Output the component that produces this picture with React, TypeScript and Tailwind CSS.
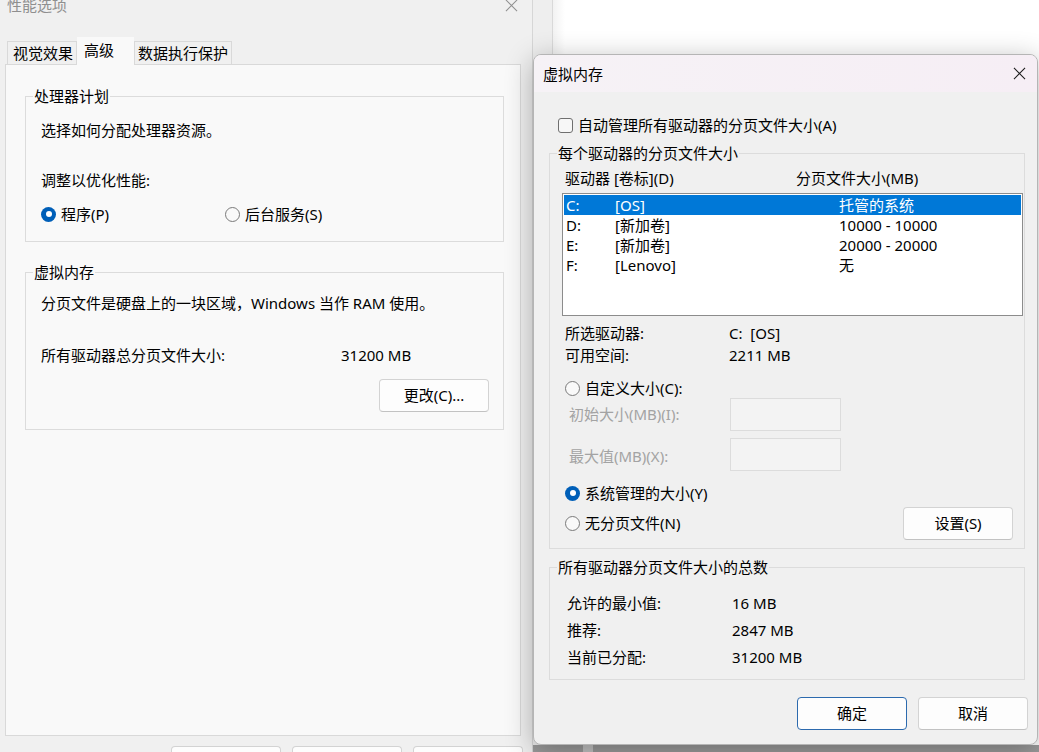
import type { ReactNode } from "react";

/** Thin window-caption close glyph */
function CloseIcon({ className }: { className?: string }) {
  return (
    <svg viewBox="0 0 14 14" className={className} fill="none" stroke="currentColor" strokeWidth="1.1">
      <path d="M1 1L13 13M13 1L1 13" />
    </svg>
  );
}

function Radio({ checked, label, className = "" }: { checked?: boolean; label: string; className?: string }) {
  return (
    <div className={`flex h-[20px] items-center gap-[5px] ${className}`}>
      {checked ? (
        <span className="flex h-[15px] w-[15px] shrink-0 items-center justify-center rounded-full bg-[#005fb8]">
          <span className="h-[6px] w-[6px] rounded-full bg-white" />
        </span>
      ) : (
        <span className="h-[15px] w-[15px] shrink-0 rounded-full border border-[#7a7a7a] bg-[#f9f9f9]" />
      )}
      <span>{label}</span>
    </div>
  );
}

/** Classic Win32 group box */
function Group({ title, className = "", children }: { title: string; className?: string; children: ReactNode }) {
  return (
    <fieldset className={`border border-[#dcdcdc] ${className}`}>
      <legend className="ml-[7px] px-[1px] leading-[20px]">{title}</legend>
      {children}
    </fieldset>
  );
}

function Button({ label, primary, className = "" }: { label?: string; primary?: boolean; className?: string }) {
  return (
    <div
      className={`flex h-[33px] w-[110px] items-center justify-center rounded-[4px] border bg-[#fdfdfd] ${
        primary ? "border-[#2c6aae]" : "border-[#d3d3d3] border-b-[#c2c2c2]"
      } ${className}`}
    >
      {label}
    </div>
  );
}

const drives = [
  { letter: "C:", label: "[OS]", size: "托管的系统", selected: true },
  { letter: "D:", label: "[新加卷]", size: "10000 - 10000" },
  { letter: "E:", label: "[新加卷]", size: "20000 - 20000" },
  { letter: "F:", label: "[Lenovo]", size: "无" },
];

function PerformanceOptions() {
  return (
    <div className="absolute left-0 top-[-14px] flex h-[790px] w-[533px] flex-col border-r border-[#d6d6d6] bg-[#f0f0f0]">
      {/* Title bar (inactive) */}
      <div className="flex h-[38px] shrink-0 items-center justify-between pl-[7px] pr-[14px] text-[#8f8f8f]">
        <span className="leading-[20px]">性能选项</span>
        <CloseIcon className="h-[13px] w-[13px]" />
      </div>

      {/* Tabs */}
      <div className="mt-[13px] flex h-[27px] shrink-0 items-end pl-[7px]">
        <div className="flex h-[23px] w-[70px] items-center border border-b-0 border-[#d9d9d9] pl-[5px]">视觉效果</div>
        <div className="relative z-10 mb-[-1px] flex h-[28px] w-[57px] items-center bg-[#f9f9f9] pb-[2px] pl-[7px]">
          高级
        </div>
        <div className="flex h-[23px] w-[98px] items-center border border-b-0 border-[#d9d9d9] pl-[3px]">
          数据执行保护
        </div>
      </div>

      {/* Tab panel */}
      <div className="ml-[5px] h-[672px] w-[516px] shrink-0 border border-[#d9d9d9] bg-[#f9f9f9] pl-[19px] pt-[21px]">
        <Group title="处理器计划" className="w-[479px]">
          <div className="pb-[17px] pl-[15px]">
            <div className="mt-[14px] leading-[20px]">选择如何分配处理器资源。</div>
            <div className="mt-[30px] leading-[20px]">调整以优化性能:</div>
            <div className="mt-[14px] flex">
              <Radio checked label="程序(P)" className="w-[184px]" />
              <Radio label="后台服务(S)" />
            </div>
          </div>
        </Group>

        <Group title="虚拟内存" className="mt-[20px] w-[479px]">
          <div className="pb-[17px] pl-[15px] pr-[14px]">
            <div className="mt-[11px] leading-[20px]">分页文件是硬盘上的一块区域，Windows 当作 RAM 使用。</div>
            <div className="mt-[32px] flex leading-[20px]">
              <span className="w-[300px]">所有驱动器总分页文件大小:</span>
              <span>31200 MB</span>
            </div>
            <div className="mt-[14px] flex justify-end">
              <Button label="更改(C)..." />
            </div>
          </div>
        </Group>
      </div>

      {/* Dialog buttons, only their top edge shows */}
      <div className="mt-[10px] flex gap-[11px] pl-[171px]">
        <Button />
        <Button />
        <Button />
      </div>
    </div>
  );
}

function VirtualMemory() {
  return (
    <div className="absolute left-[533px] top-[54px] flex h-[691px] w-[505px] flex-col overflow-hidden rounded-[8px] border border-[#b5b5b5] bg-[#f0f0f0] shadow-[0_6px_28px_rgba(0,0,0,0.3)]">
      {/* Title bar */}
      <div className="flex h-[37px] shrink-0 items-center justify-between bg-gradient-to-r from-[#f6f2f6] to-[#f6eef5] pl-[9px] pr-[11px]">
        <span className="leading-[20px]">虚拟内存</span>
        <CloseIcon className="h-[13px] w-[13px] text-[#1a1a1a]" />
      </div>

      <div className="px-[15px]">
        <div className="ml-[9px] mt-[23px] flex h-[20px] items-center gap-[5px]">
          <span className="h-[15px] w-[15px] rounded-[3px] border border-[#6f6f6f] bg-[#f7f7f7]" />
          <span>自动管理所有驱动器的分页文件大小(A)</span>
        </div>

        <Group title="每个驱动器的分页文件大小" className="mt-[8px] w-[476px]">
          <div className="pb-[9px] pl-[12px] pr-[1px]">
            <div className="mt-[5px] flex pl-[3px] leading-[20px]">
              <span className="w-[231px]">驱动器 [卷标](D)</span>
              <span>分页文件大小(MB)</span>
            </div>

            {/* Drive list */}
            <div className="mt-[5px] h-[123px] w-[461px] border border-[#8c8c8c] bg-white p-[1px]">
              {drives.map((d) => (
                <div
                  key={d.letter}
                  className={`flex h-[20px] items-center pl-[2px] ${d.selected ? "bg-[#0078d7] text-white" : ""}`}
                >
                  <span className="w-[49px]">{d.letter}</span>
                  <span className="w-[224px]">{d.label}</span>
                  <span>{d.size}</span>
                </div>
              ))}
            </div>

            <div className="mt-[7px] flex pl-[3px] leading-[20px]">
              <span className="w-[164px]">所选驱动器:</span>
              <span>C:&nbsp;&nbsp;[OS]</span>
            </div>
            <div className="mt-[2px] flex pl-[3px] leading-[20px]">
              <span className="w-[164px]">可用空间:</span>
              <span>2211 MB</span>
            </div>

            <Radio label="自定义大小(C):" className="mt-[13px] pl-[3px]" />
            <div className="flex h-[33px] items-center pl-[7px] text-[#a3a3a3]">
              <span className="w-[161px]">初始大小(MB)(I):</span>
              <span className="h-[33px] w-[111px] border border-[#dcdcdc] bg-[#f3f3f3]" />
            </div>
            <div className="mt-[7px] flex h-[33px] items-center pl-[7px] text-[#a3a3a3]">
              <span className="w-[161px] pt-[4px]">最大值(MB)(X):</span>
              <span className="h-[33px] w-[111px] border border-[#dcdcdc] bg-[#f3f3f3]" />
            </div>

            <Radio checked label="系统管理的大小(Y)" className="mt-[12px] pl-[3px]" />
            <div className="mt-[4px] flex h-[32px] items-center justify-between pl-[3px] pr-[10px]">
              <Radio label="无分页文件(N)" />
              <Button label="设置(S)" className="h-[32px]" />
            </div>
          </div>
        </Group>

        <Group title="所有驱动器分页文件大小的总数" className="mt-[8px] w-[476px]">
          <div className="pb-[8px] pl-[17px] pt-[13px]">
            {[
              ["允许的最小值:", "16 MB"],
              ["推荐:", "2847 MB"],
              ["当前已分配:", "31200 MB"],
            ].map(([k, v]) => (
              <div key={k} className="flex h-[27px] items-center">
                <span className="w-[165px]">{k}</span>
                <span>{v}</span>
              </div>
            ))}
          </div>
        </Group>
      </div>

      <div className="mt-[17px] flex justify-end gap-[11px] pr-[9px]">
        <Button primary label="确定" />
        <Button label="取消" />
      </div>
    </div>
  );
}

export default function App() {
  return (
    <div className="relative h-[752px] w-[1039px] overflow-hidden bg-white font-['Noto_Sans','Noto_Sans_CJK_SC',sans-serif] text-[15px] text-black">
      {/* Window behind both dialogs */}
      <div className="absolute bottom-0 left-[533px] right-0 top-0 flex">
        <div className="w-[20px] border-r border-[#d9d9d9] bg-[#eeeeee]" />
        <div className="w-[12px] bg-gradient-to-r from-[#f2f2f2] to-white" />
        <div className="flex-1 bg-white" />
      </div>
      <div className="absolute bottom-0 left-[533px] right-0 flex h-[7px] bg-[#9c9c9c]">
        <div className="ml-[50px] w-[10px] bg-[#c4c4c4]" />
      </div>

      <PerformanceOptions />
      <VirtualMemory />
    </div>
  );
}
